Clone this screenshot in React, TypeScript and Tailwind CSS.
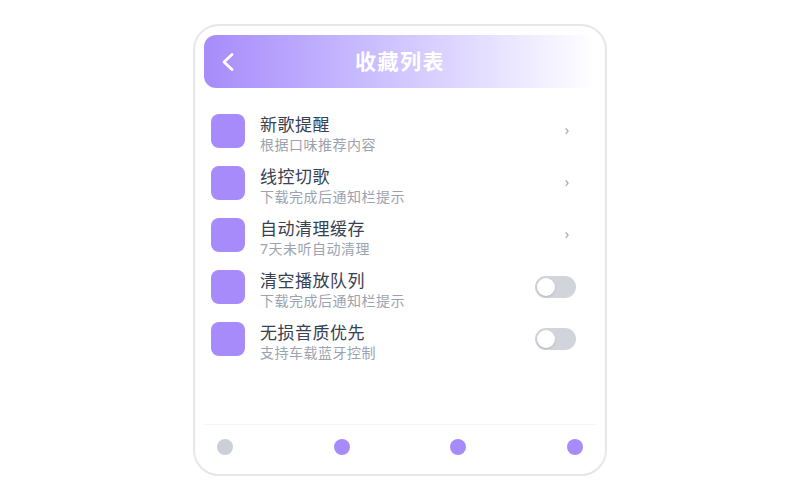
import React from "react";

const rows = [
  { title: "新歌提醒", sub: "根据口味推荐内容", kind: "chevron" },
  { title: "线控切歌", sub: "下载完成后通知栏提示", kind: "chevron" },
  { title: "自动清理缓存", sub: "7天未听自动清理", kind: "chevron" },
  { title: "清空播放队列", sub: "下载完成后通知栏提示", kind: "toggle" },
  { title: "无损音质优先", sub: "支持车载蓝牙控制", kind: "toggle" },
];

export default function App() {
  return (
    <div
      className="w-[800px] h-[500px] bg-white flex justify-center pt-[24px]"
      style={{ fontFamily: '"Noto Sans", "Noto Sans CJK SC", sans-serif' }}
    >
      <div className="w-[414px] h-[452px] border-2 border-[#e5e7eb] rounded-[26px] p-[9px] flex flex-col bg-white">
        <div className="h-[53px] rounded-[12px] bg-gradient-to-r from-[#a78bfa] to-white flex items-center relative shrink-0">
          <svg
            className="absolute left-[17px] top-[17px]"
            width="14"
            height="20"
            viewBox="0 0 14 20"
            fill="none"
          >
            <polyline
              points="11,2.5 3,10 11,17.5"
              stroke="white"
              strokeWidth="2.8"
              strokeLinecap="round"
              strokeLinejoin="round"
            />
          </svg>
          <div className="flex-1 text-center text-white font-bold text-[21px] tracking-[1.5px] leading-none">
            收藏列表
          </div>
        </div>

        <div className="flex flex-col pt-[17px] px-[7px]">
          {rows.map((r) => (
            <div key={r.title} className="flex items-center h-[52px] gap-[15px]">
              <div className="w-[34px] h-[34px] rounded-[8px] bg-[#a78bfa] shrink-0" />
              <div className="flex-1 flex flex-col pt-[5px]">
                <div className="text-[17px] tracking-[0.5px] leading-[23px] text-[#374151]">{r.title}</div>
                <div className="text-[14px] tracking-[0.5px] leading-[18px] text-[#9ca3af]">{r.sub}</div>
              </div>
              {r.kind === "chevron" ? (
                <div className="text-[14px] leading-none text-[#9ca3af] mr-[20px] pb-[2px]">›</div>
              ) : (
                <div className="w-[41px] h-[22px] rounded-full bg-[#d1d5db] p-[2px] mr-[13px] flex items-center">
                  <div className="w-[18px] h-[18px] rounded-full bg-white shadow-sm" />
                </div>
              )}
            </div>
          ))}
        </div>

        <div className="flex-1" />

        <div className="border-t border-[#f3f4f6] pt-[14px] pb-[10px] px-[12px] mx-[1px] flex justify-between">
          <div className="w-[16px] h-[16px] rounded-full bg-[#cbd0d8]" />
          <div className="w-[16px] h-[16px] rounded-full bg-[#a78bfa]" />
          <div className="w-[16px] h-[16px] rounded-full bg-[#a78bfa]" />
          <div className="w-[16px] h-[16px] rounded-full bg-[#a78bfa]" />
        </div>
      </div>
    </div>
  );
}
